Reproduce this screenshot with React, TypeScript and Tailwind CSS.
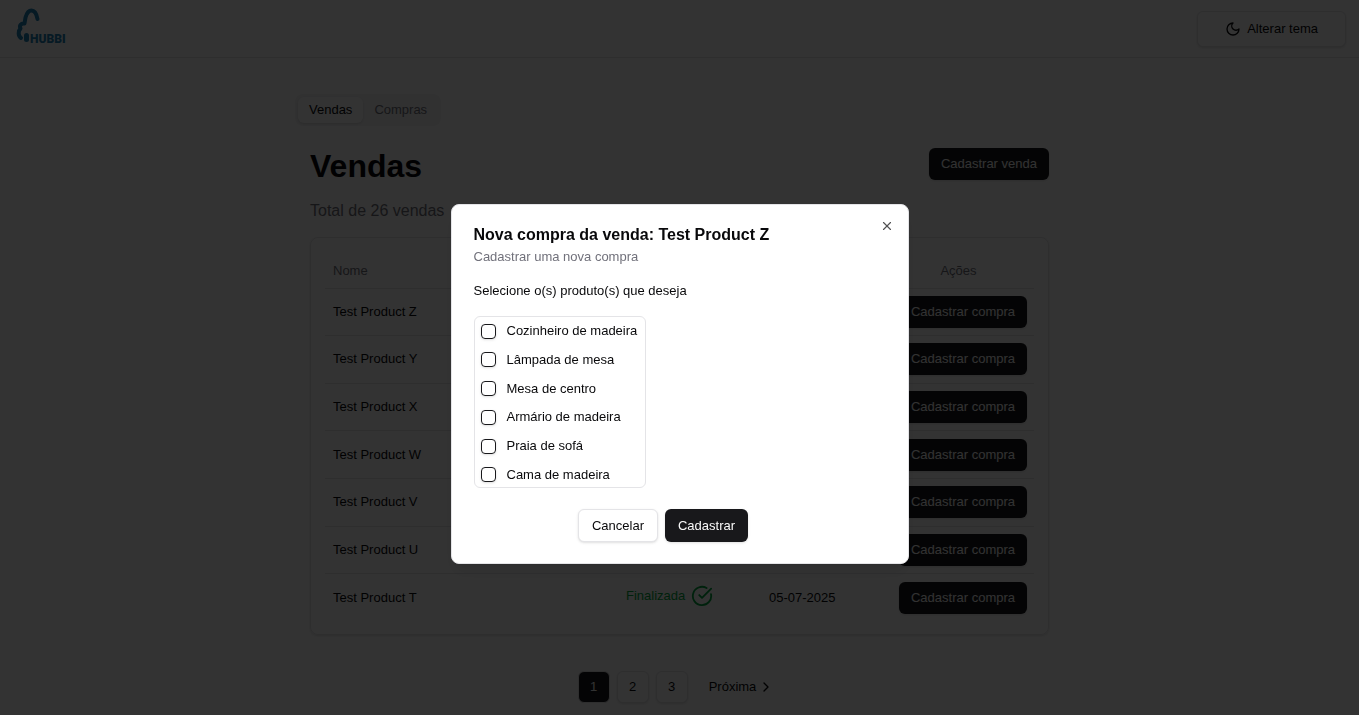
import { useState } from "react";
import { ChevronRight, CircleCheckBig, X } from "lucide-react";

type Sale = { name: string; status?: string; date?: string };

const sales: Sale[] = [
  { name: "Test Product Z" },
  { name: "Test Product Y" },
  { name: "Test Product X" },
  { name: "Test Product W" },
  { name: "Test Product V" },
  { name: "Test Product U" },
  { name: "Test Product T", status: "Finalizada", date: "05-07-2025" },
];

const products = [
  "Cozinheiro de madeira",
  "Lâmpada de mesa",
  "Mesa de centro",
  "Armário de madeira",
  "Praia de sofá",
  "Cama de madeira",
];

const primary = "h-8 rounded-md bg-zinc-900 text-zinc-50 shadow-sm whitespace-nowrap";
const outline = "rounded-md border border-zinc-200 bg-white shadow-sm whitespace-nowrap";

function Logo() {
  return (
    <svg viewBox="0 0 52 40" className="h-10 w-[52px]" role="img" aria-label="Hubbi">
      <g fill="none" stroke="#1f80b5" strokeLinecap="round" strokeLinejoin="round">
        <path
          d="M21.500 13C20.500 7.500 18.500 4.500 15.500 4.500C12 4.500 10.500 8 9.500 11.500L8.500 17.500C5 17 3 19.500 4.500 22.500C2 25 2 30 5 32"
          strokeWidth="4"
        />
        <path d="M10.500 29.500v4" strokeWidth="5" />
      </g>
      <text x="14" y="37" fontSize="12" fontWeight="900" fill="#1f80b5" fontFamily="Roboto, sans-serif">
        HUBBI
      </text>
    </svg>
  );
}

function MoonIcon() {
  return (
    <svg
      viewBox="0 0 24 24"
      className="size-4"
      fill="none"
      stroke="currentColor"
      strokeWidth="2"
      strokeLinecap="round"
      strokeLinejoin="round"
      aria-hidden="true"
    >
      <path d="M12 3a6 6 0 0 0 9 9 9 9 0 1 1-9-9Z" />
    </svg>
  );
}

function Header() {
  return (
    <header className="flex h-[58px] items-start justify-between border-b border-zinc-200 pr-[13px] pl-4">
      <a href="#" className="pt-[6px]">
        <Logo />
      </a>
      <button className={`${outline} mt-[11px] flex h-9 items-center gap-[6px] px-[27px]`}>
        <MoonIcon />
        Alterar tema
      </button>
    </header>
  );
}

function SalesTable() {
  return (
    <div className="mt-[14px] rounded-lg border border-zinc-200 px-[14px] py-[13px] shadow-sm">
      <table className="h-[370px] w-full table-fixed text-left">
        <colgroup>
          <col />
          <col className="w-[143px]" />
          <col className="w-[130px]" />
          <col className="w-[143px]" />
        </colgroup>
        <thead className="text-zinc-500">
          <tr className="h-[37px] border-b border-zinc-200">
            <th className="px-2 pt-1 font-normal">Nome</th>
            <th />
            <th />
            <th className="pt-1 pr-4 pl-2 text-center font-normal">Ações</th>
          </tr>
        </thead>
        <tbody>
          {sales.map(({ name, status, date }) => (
            <tr key={name} className="border-b border-zinc-200 last:border-0">
              <td className="px-2">{name}</td>
              <td className="px-2">
                {status && (
                  <span className="flex items-center gap-[6px] pb-1 text-green-600">
                    {status}
                    <CircleCheckBig size={22} />
                  </span>
                )}
              </td>
              <td className="px-2">{date}</td>
              <td className="px-2 py-[7px]">
                <button className={`${primary} w-32`}>Cadastrar compra</button>
              </td>
            </tr>
          ))}
        </tbody>
      </table>
    </div>
  );
}

function Pagination() {
  return (
    <nav aria-label="Paginação" className="mt-9 flex justify-center gap-[7px]">
      <button aria-current="page" className="size-8 rounded-md border border-zinc-200 bg-zinc-900 text-zinc-50">
        1
      </button>
      <button className={`${outline} size-8`}>2</button>
      <button className={`${outline} size-8`}>3</button>
      <button className="flex h-8 items-center gap-[2px] pr-[7px] pl-[14px]">
        Próxima
        <ChevronRight size={16} strokeWidth={2} />
      </button>
    </nav>
  );
}

function PurchaseDialog({ onClose }: { onClose: () => void }) {
  return (
    <div className="fixed inset-0 flex items-start justify-center bg-black/80 pt-[204px]">
      <div
        role="dialog"
        aria-modal="true"
        aria-labelledby="dialog-title"
        className="relative w-full max-w-[458px] rounded-lg border border-zinc-200 bg-white px-[22px] pt-[21px] pb-[21px] shadow-lg"
      >
        <h2 id="dialog-title" className="text-base leading-[18px] font-semibold">
          Nova compra da venda: Test Product Z
        </h2>
        <p className="mt-1 text-zinc-500">Cadastrar uma nova compra</p>
        <form className="pt-4" onSubmit={(event) => event.preventDefault()}>
          <fieldset>
            <legend className="mb-4">Selecione o(s) produto(s) que deseja</legend>
            <div className="flex h-[172px] w-[172px] flex-col justify-between rounded-md border border-zinc-200 pt-[6px] pr-2 pb-1 pl-[6px]">
              {products.map((product) => (
                <label key={product} className="flex h-4 items-center gap-[11px] whitespace-nowrap">
                  <input
                    type="checkbox"
                    className="size-[15px] shrink-0 appearance-none rounded-[4px] border border-zinc-900 shadow-sm checked:bg-zinc-900"
                  />
                  {product}
                </label>
              ))}
            </div>
          </fieldset>
          <div className="mt-[21px] flex justify-center gap-[7px] pr-[33px]">
            <button type="button" onClick={onClose} className={`${outline} h-[33px] px-[13px]`}>
              Cancelar
            </button>
            <button type="submit" className="h-[33px] rounded-md bg-zinc-900 px-[13px] text-zinc-50 shadow-sm">
              Cadastrar
            </button>
          </div>
        </form>
        <button aria-label="Fechar" onClick={onClose} className="absolute top-[14px] right-[14px] opacity-70">
          <X size={14} strokeWidth={2} />
        </button>
      </div>
    </div>
  );
}

export default function App() {
  const [open, setOpen] = useState(true);

  return (
    <div className="min-h-screen bg-white font-['Liberation_Sans',Arial,sans-serif] text-[13px] leading-[18px] text-zinc-950">
      <Header />
      <main className="mx-auto max-w-[769px] pt-9 pb-3">
        <div role="tablist" className="inline-flex h-8 items-center rounded-lg bg-zinc-100 p-[3px] text-zinc-500">
          <button role="tab" aria-selected="true" className="h-[26px] rounded-md bg-white px-[11px] text-zinc-950 shadow-sm">
            Vendas
          </button>
          <button role="tab" aria-selected="false" className="h-[26px] px-[11px]">
            Compras
          </button>
        </div>
        <section className="px-[15px] pt-[22px]">
          <div className="flex items-start justify-between">
            <h1 className="text-[32px] leading-9 font-bold">Vendas</h1>
            <button className={`${primary} px-3`}>Cadastrar venda</button>
          </div>
          <p className="mt-[15px] text-base leading-6 text-zinc-500">Total de 26 vendas</p>
          <SalesTable />
          <Pagination />
        </section>
      </main>
      {open && <PurchaseDialog onClose={() => setOpen(false)} />}
    </div>
  );
}
